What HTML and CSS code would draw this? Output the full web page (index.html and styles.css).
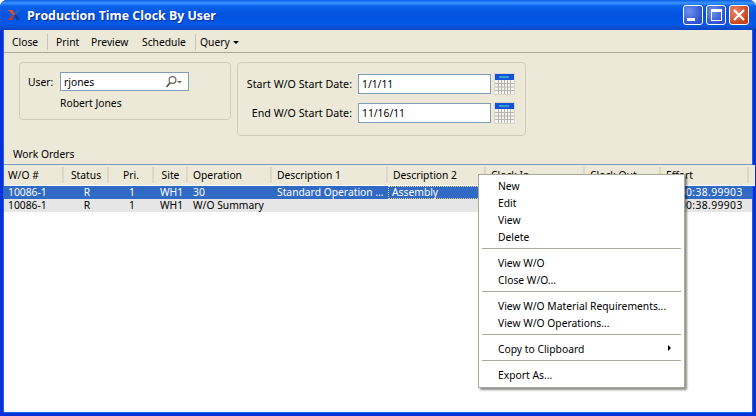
FILE: index.html
```html
<!DOCTYPE html>
<html lang="en">
<head>
<meta charset="UTF-8">
<title>Production Time Clock By User</title>
<link rel="stylesheet" href="styles.css">
</head>
<body>
<div class="window">
  <div class="titlebar">
    <svg class="logo" width="16" height="14" viewBox="0 0 16 14">
      <path d="M2 2h4.500l2.500 4.500-1 1L7 7z" fill="#e8501e"/>
      <path d="M2 12l4-5 1.500 0.500L6.500 12z" fill="#c8381c"/>
      <path d="M8 5l3-3h3l-4 5z" fill="#2a62c0"/>
      <path d="M8.500 7.500l1.500-1L14 12h-3.500z" fill="#123a8c"/>
    </svg>
    <span class="title">Production Time Clock By User</span>
    <div class="caption-btns">
      <div class="cbtn"><span class="min-glyph"></span></div>
      <div class="cbtn"><span class="max-glyph"></span></div>
      <div class="cbtn cbtn-close">
        <svg width="14" height="14" viewBox="0 0 14 14"><path d="M2 2l10 10M12 2L2 12" stroke="#fff" stroke-width="2.2"/></svg>
      </div>
    </div>
  </div>
  <div class="client">
    <div class="toolbar">
      <span class="tool tool-close">Close</span>
      <span class="tool-sep"></span>
      <span class="tool tool-print">Print</span>
      <span class="tool tool-preview">Preview</span>
      <span class="tool tool-schedule">Schedule</span>
      <span class="tool-sep"></span>
      <span class="tool tool-query">Query <i class="caret"></i></span>
    </div>
    <div class="params">
      <div class="group group-user">
        <div class="user-row">
          <label class="user-label">User:</label>
          <div class="field user-field">
            <span>rjones</span>
            <svg class="lookup" width="20" height="14" viewBox="0 0 20 14">
              <circle cx="7.500" cy="5" r="3.400" fill="#fff" stroke="#6b6b60" stroke-width="1.200"/>
              <path d="M5 7.800L1.500 12" stroke="#5a5a50" stroke-width="1.800"/>
              <path d="M12 6h5l-2.500 2.500z" fill="#6b6b60"/>
            </svg>
          </div>
        </div>
        <div class="user-name">Robert Jones</div>
      </div>
      <div class="group group-dates">
        <div class="date-row">
          <label class="date-label">Start W/O Start Date:</label>
          <div class="field date-field">1/1/11</div>
          <svg class="cal" width="21" height="22" viewBox="0 0 21 22">
            <rect width="21" height="22" fill="#d8d6c8"/>
            <rect x="1" y="1" width="19" height="6" fill="#1450d8"/>
            <rect x="5" y="3" width="10" height="2" fill="#2fa0c8"/>
            <rect x="1" y="7" width="19" height="14" fill="#f4f4f0"/>
            <path d="M1 10.500h19M1 14h19M1 17.500h19M4.500 7v14M7.500 7v14M10.500 7v14M13.500 7v14M16.500 7v14" stroke="#b4b4ac" stroke-width="1"/>
          </svg>
        </div>
        <div class="date-row">
          <label class="date-label">End W/O Start Date:</label>
          <div class="field date-field">11/16/11</div>
          <svg class="cal" width="21" height="22" viewBox="0 0 21 22">
            <rect width="21" height="22" fill="#d8d6c8"/>
            <rect x="1" y="1" width="19" height="6" fill="#1450d8"/>
            <rect x="5" y="3" width="10" height="2" fill="#2fa0c8"/>
            <rect x="1" y="7" width="19" height="14" fill="#f4f4f0"/>
            <path d="M1 10.500h19M1 14h19M1 17.500h19M4.500 7v14M7.500 7v14M10.500 7v14M13.500 7v14M16.500 7v14" stroke="#b4b4ac" stroke-width="1"/>
          </svg>
        </div>
      </div>
    </div>
    <div class="list-title">Work Orders</div>
    <div class="list">
      <div class="row head">
        <div>W/O #</div>
        <div class="center">Status</div>
        <div class="center">Pri.</div>
        <div class="center">Site</div>
        <div>Operation</div>
        <div>Description 1</div>
        <div>Description 2</div>
        <div>Clock In</div>
        <div>Clock Out</div>
        <div>Effort</div>
      </div>
      <div class="row selected">
        <div>10086-1</div>
        <div class="center">R</div>
        <div class="center">1</div>
        <div class="center">WH1</div>
        <div>30</div>
        <div>Standard Operation ...</div>
        <div class="focus">Assembly</div>
        <div></div>
        <div></div>
        <div class="effort">00:00:38.99903</div>
      </div>
      <div class="row alt">
        <div>10086-1</div>
        <div class="center">R</div>
        <div class="center">1</div>
        <div class="center">WH1</div>
        <div>W/O Summary</div>
        <div></div>
        <div></div>
        <div></div>
        <div></div>
        <div class="effort">00:00:38.99903</div>
      </div>
    </div>
    <div class="menu">
      <div class="item">New</div>
      <div class="item">Edit</div>
      <div class="item">View</div>
      <div class="item">Delete</div>
      <div class="menu-sep"></div>
      <div class="item">View W/O</div>
      <div class="item">Close W/O...</div>
      <div class="menu-sep"></div>
      <div class="item">View W/O Material Requirements...</div>
      <div class="item">View W/O Operations...</div>
      <div class="menu-sep"></div>
      <div class="item">Copy to Clipboard<i class="arrow"></i></div>
      <div class="menu-sep"></div>
      <div class="item">Export As...</div>
    </div>
  </div>
</div>
</body>
</html>
```

FILE: styles.css
```css
html, body {
    margin: 0;
    padding: 0;
    background: #fff;
}
body {
    font-family: "Noto Sans", sans-serif;
    font-size: 10.3px;
    color: #000;
    width: 756px;
    height: 416px;
    overflow: hidden;
}
.window {
    width: 756px;
    height: 416px;
    display: flex;
    flex-direction: column;
    background: #0831d9;
    border-radius: 7px 7px 0 0;
    overflow: hidden;
}
.titlebar {
    height: 30px;
    flex: none;
    display: flex;
    align-items: center;
    padding: 0 7px 0 6px;
    box-sizing: border-box;
    background: linear-gradient(#0a5fe8 0, #3a93ff 3px, #0a62ea 6px, #0354e0 14px, #0358e6 24px, #0a4ed0 28px, #0842c0 30px);
}
.logo {
    flex: none;
    margin-right: 5px;
}
.title {
    font-family: "Open Sans", sans-serif;
    font-weight: 700;
    font-size: 12.400px;
    color: #fff;
    text-shadow: 1px 1px 0 #0a2f9c;
    white-space: nowrap;
}
.caption-btns {
    margin-left: auto;
    display: flex;
    gap: 3px;
}
.cbtn {
    border: 1px solid #fff;
    border-radius: 3px;
    width: 18px;
    height: 18px;
    display: flex;
    align-items: center;
    justify-content: center;
    background: radial-gradient(circle at 30% 30%, #6f92ec, #2d50d0 75%);
}
.cbtn-close {
    background: radial-gradient(circle at 30% 30%, #e9856a, #c8401a 75%);
}
.min-glyph {
    width: 8px;
    height: 3px;
    background: #fff;
    margin: 8px 4px 0 0;
}
.max-glyph {
    width: 9px;
    height: 8px;
    border: 1px solid #fff;
    border-top-width: 3px;
}
.client {
    flex: 1;
    margin: 0 4px 4px;
    background: #ece9d8;
    display: flex;
    flex-direction: column;
    position: relative;
    box-shadow: -1px 0 0 #1a63e8, 1px 0 0 #1a63e8, 0 1px 0 #1a63e8;
}
.toolbar {
    height: 23px;
    box-sizing: border-box;
    flex: none;
    display: flex;
    align-items: center;
    border-bottom: 1px solid #aca899;
    padding: 1px 0 0 8px;
}
.tool {
    white-space: nowrap;
}
.tool-close { width: 35px; }
.tool-sep {
    width: 1px;
    height: 16px;
    background: #c8c5b2;
    flex: none;
}
.tool-print { margin-left: 8px; width: 35px; }
.tool-preview { width: 51px; }
.tool-schedule { width: 53px; }
.tool-query { margin-left: 4px; }
.caret {
    display: inline-block;
    border: 3px solid transparent;
    border-top: 3px solid #000;
    border-bottom: 0;
    margin: 0 0 2px 1px;
}
.params {
    flex: none;
    display: flex;
    align-items: flex-start;
    gap: 6px;
    padding: 9px 0 0 15px;
}
.group {
    border: 1px solid #d0cdbb;
    border-radius: 4px;
    box-sizing: border-box;
}
.group-user {
    width: 212px;
    height: 58px;
    padding: 9px 0 0 8px;
}
.user-row {
    display: flex;
    align-items: center;
    gap: 7px;
}
.user-label {
    width: 25px;
}
.field {
    background: #fff;
    border: 1px solid #7f9db9;
    box-sizing: border-box;
    display: flex;
    align-items: center;
    padding-left: 3px;
}
.user-field {
    width: 129px;
    height: 19px;
    justify-content: space-between;
}
.lookup {
    flex: none;
    margin-right: 3px;
}
.user-name {
    margin: 5px 0 0 32px;
}
.group-dates {
    width: 289px;
    height: 74px;
    padding: 10px 0 0 0;
    display: flex;
    flex-direction: column;
    gap: 7px;
}
.date-row {
    display: flex;
    align-items: center;
    height: 22px;
}
.date-label {
    width: 114px;
    text-align: right;
    margin-right: 6px;
    white-space: nowrap;
    font-size: 10.700px;
}
.date-field {
    width: 133px;
    height: 20px;
    margin-right: 3px;
}
.list-title {
    flex: none;
    margin: 10px 0 0 9px;
    height: 18px;
    line-height: 16px;
}
.list {
    flex: 1;
    background: #fff;
    border-top: 1px solid #7f9db9;
}
.row {
    display: grid;
    grid-template-columns: 60px 45px 45px 34px 84px 116px 98px 99px 76px 88px;
    height: 13px;
    line-height: 13px;
    white-space: nowrap;
}
.row > div {
    padding-left: 4px;
    overflow: hidden;
}
.row > div:nth-child(n+5) {
    padding-left: 5px;
}
.row .center {
    padding-left: 1px;
    text-align: center;
}
.head {
    height: 21px;
    background: #ece9d8;
    border-bottom: 1px solid #fff;
    box-sizing: border-box;
    margin-right: -3px;
}
.head > div {
    border-right: 2px solid #dcd9c9;
    box-sizing: border-box;
    margin: 2px 0;
    line-height: 16px;
}
.selected {
    background: #316ac5;
    color: #fff;
}
.alt {
    background: #e6e6e6;
}
.row > div.focus {
    outline: 1px dotted #e6cf8c;
    outline-offset: -1px;
    padding-left: 4px;
}
.row > div.effort {
    padding-left: 3px;
    letter-spacing: 0.4px;
}
.menu {
    position: absolute;
    left: 474px;
    top: 144px;
    width: 207px;
    box-sizing: border-box;
    background: #fff;
    border: 1px solid #aca899;
    padding: 3px;
    box-shadow: 2px 2px 2px rgba(0, 0, 0, 0.45);
}
.item {
    height: 17px;
    line-height: 16px;
    padding-left: 16px;
    position: relative;
}
.arrow {
    position: absolute;
    right: 10px;
    top: 4px;
    border: 3px solid transparent;
    border-left: 3px solid #000;
    border-right: 0;
}
.menu-sep {
    height: 1px;
    background: #aca899;
    margin: 2px 0 6px;
}
```
